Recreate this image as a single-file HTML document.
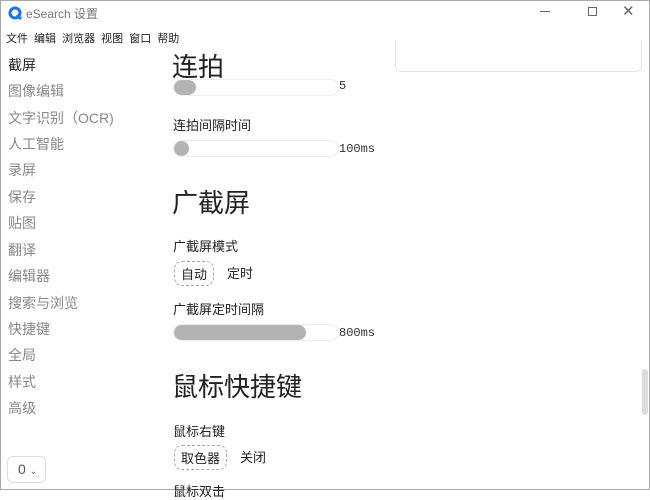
<!DOCTYPE html><html><head><meta charset="utf-8"><style>
*{margin:0;padding:0;box-sizing:border-box}
body{width:650px;height:490px;overflow:hidden;background:#fff;font-family:"Liberation Sans","Noto Sans CJK SC",sans-serif;position:relative;color:#222}
.win{position:absolute;inset:0;border:1px solid #aaa}
.a{position:absolute;white-space:nowrap}
.side{font-size:14px;color:#888;left:8px}
.h{font-size:26px;left:172px;color:#222}
.l{font-size:13px;left:173px}
.sl{position:absolute;left:173px;width:166px;height:17px;border:1px solid #eee;border-radius:9px;overflow:hidden}
.sl i{position:absolute;left:0;top:0;bottom:0;background:#b3b3b3;border-radius:9px}
.v{font-family:"Liberation Mono",monospace;font-size:12px;color:#333;left:339px}
.bt{position:absolute;border:1.5px dashed #aaa;border-radius:8px;font-size:13px;padding:2px 6px}
</style></head><body><div class="win"></div>
<svg class="a" style="left:8px;top:6px" width="14" height="14" viewBox="0 0 14 14"><circle cx="7" cy="7" r="5" fill="none" stroke="#1a73e8" stroke-width="3"/><path d="M9 9l4 4" stroke="#1a73e8" stroke-width="3"/></svg>
<div class="a" style="left:26px;top:5px;font-size:12px;color:#777">eSearch 设置</div>
<div class="a" style="left:540px;top:11px;width:10px;border-top:1px solid #666"></div>
<div class="a" style="left:588px;top:7px;width:9px;height:9px;border:1px solid #666"></div>
<div class="a" style="left:622px;top:2px;font-size:15px;color:#666">✕</div>
<div class="a" style="left:6px;top:30px;font-size:11px;word-spacing:3px">文件 编辑 浏览器 视图 窗口 帮助</div>
<div class="a side" style="top:55px;color:#222">截屏</div>
<div class="a side" style="top:81px">图像编辑</div>
<div class="a side" style="top:108px">文字识别（OCR)</div>
<div class="a side" style="top:134px">人工智能</div>
<div class="a side" style="top:160px">录屏</div>
<div class="a side" style="top:187px">保存</div>
<div class="a side" style="top:213px">贴图</div>
<div class="a side" style="top:240px">翻译</div>
<div class="a side" style="top:266px">编辑器</div>
<div class="a side" style="top:293px">搜索与浏览</div>
<div class="a side" style="top:319px">快捷键</div>
<div class="a side" style="top:345px">全局</div>
<div class="a side" style="top:372px">样式</div>
<div class="a side" style="top:398px">高级</div>
<div class="a" style="left:7px;top:456px;width:39px;height:27px;border:1px solid #ddd;border-radius:6px;font-size:14px;color:#555;padding:4px 0 0 10px">0 <span style="font-size:9px">⌄</span></div>
<div class="a" style="left:395px;top:40px;width:247px;height:32px;border:1px solid #e5e5e5;border-top:none;border-radius:0 0 6px 6px"></div>
<div class="a h" style="top:47px">连拍</div>
<div class="sl" style="top:79px"><i style="width:22px"></i></div>
<div class="a v" style="top:79px">5</div>
<div class="a l" style="top:115px">连拍间隔时间</div>
<div class="sl" style="top:140px"><i style="width:15px"></i></div>
<div class="a v" style="top:142px">100ms</div>
<div class="a h" style="top:183px">广截屏</div>
<div class="a l" style="top:236px">广截屏模式</div>
<div class="bt" style="left:174px;top:261px">自动</div>
<div class="a l" style="left:227px;top:263px">定时</div>
<div class="a l" style="top:299px">广截屏定时间隔</div>
<div class="sl" style="top:324px"><i style="width:132px"></i></div>
<div class="a v" style="top:326px">800ms</div>
<div class="a h" style="top:367px">鼠标快捷键</div>
<div class="a l" style="top:421px">鼠标右键</div>
<div class="bt" style="left:174px;top:445px">取色器</div>
<div class="a l" style="left:240px;top:447px">关闭</div>
<div class="a l" style="top:481px">鼠标双击</div>
<div class="a" style="left:642px;top:369px;width:6px;height:46px;background:#ddd;border-radius:3px"></div>
</body></html>
